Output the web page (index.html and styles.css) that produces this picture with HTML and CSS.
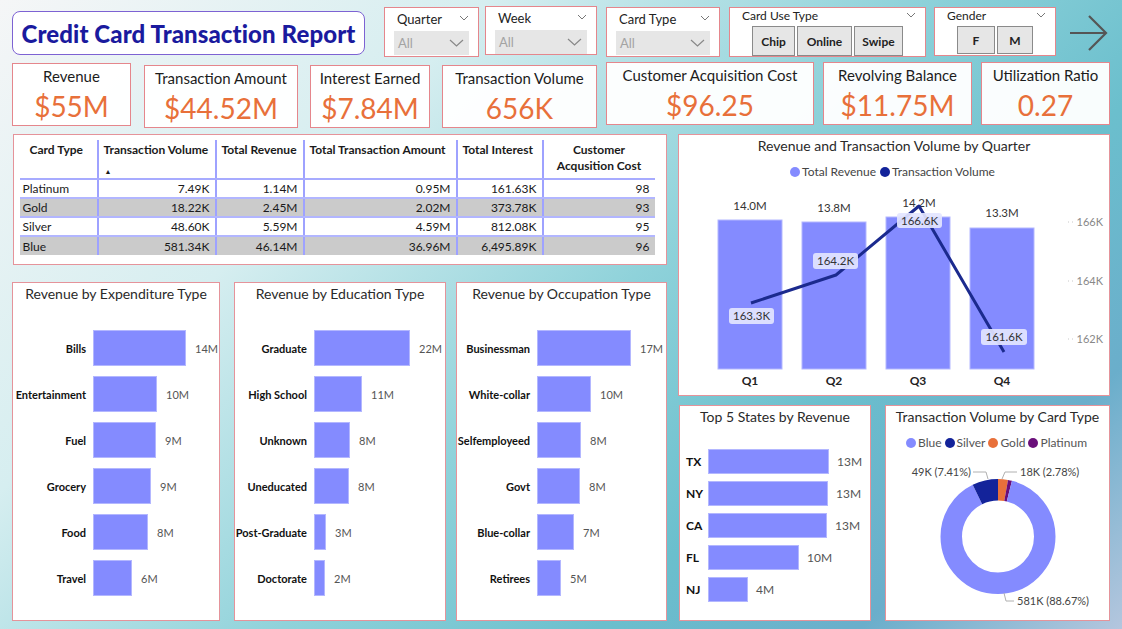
FILE: index.html
```html
<!DOCTYPE html>
<html lang="en">
<head>
<meta charset="utf-8">
<title>Credit Card Transaction Report</title>
<link rel="stylesheet" href="styles.css">
</head>
<body>
<div class="page">
  <header class="topbar">
    <div class="title-box"><h1>Credit Card Transaction Report</h1></div>

    <div class="slicer dd s-quarter">
      <div class="slicer-head"><span>Quarter</span><svg class="chev-s" width="10" height="6" viewBox="0 0 10 6"><polyline points="1,1 5,5 9,1"/></svg></div>
      <div class="dropdown"><span>All</span><svg class="chev-l" width="15" height="8" viewBox="0 0 15 8"><polyline points="1,1 7.5,7 14,1"/></svg></div>
    </div>
    <div class="slicer dd s-week">
      <div class="slicer-head"><span>Week</span><svg class="chev-s" width="10" height="6" viewBox="0 0 10 6"><polyline points="1,1 5,5 9,1"/></svg></div>
      <div class="dropdown"><span>All</span><svg class="chev-l" width="15" height="8" viewBox="0 0 15 8"><polyline points="1,1 7.5,7 14,1"/></svg></div>
    </div>
    <div class="slicer dd s-card">
      <div class="slicer-head"><span>Card Type</span><svg class="chev-s" width="10" height="6" viewBox="0 0 10 6"><polyline points="1,1 5,5 9,1"/></svg></div>
      <div class="dropdown"><span>All</span><svg class="chev-l" width="15" height="8" viewBox="0 0 15 8"><polyline points="1,1 7.5,7 14,1"/></svg></div>
    </div>
    <div class="slicer btns s-use">
      <div class="slicer-head small"><span>Card Use Type</span><svg class="chev-s" width="10" height="6" viewBox="0 0 10 6"><polyline points="1,1 5,5 9,1"/></svg></div>
      <div class="btn-row">
        <span class="tile w-chip">Chip</span>
        <span class="tile w-online">Online</span>
        <span class="tile w-swipe">Swipe</span>
      </div>
    </div>
    <div class="slicer btns s-gender">
      <div class="slicer-head small"><span>Gender</span><svg class="chev-s" width="10" height="6" viewBox="0 0 10 6"><polyline points="1,1 5,5 9,1"/></svg></div>
      <div class="btn-row">
        <span class="tile w-f">F</span>
        <span class="tile w-m">M</span>
      </div>
    </div>
    <svg class="nav-arrow" width="40" height="38" viewBox="0 0 40 38"><polyline points="1,19 37,19"/><polyline points="20,2 37,19 20,36"/></svg>
  </header>

  <section class="kpis">
    <div class="kpi k1"><div class="kpi-label">Revenue</div><div class="kpi-value">$55M</div></div>
    <div class="kpi k2"><div class="kpi-label">Transaction Amount</div><div class="kpi-value">$44.52M</div></div>
    <div class="kpi k3"><div class="kpi-label">Interest Earned</div><div class="kpi-value">$7.84M</div></div>
    <div class="kpi k4"><div class="kpi-label">Transaction Volume</div><div class="kpi-value">656K</div></div>
    <div class="kpi k5"><div class="kpi-label">Customer Acquisition Cost</div><div class="kpi-value">$96.25</div></div>
    <div class="kpi k6"><div class="kpi-label">Revolving Balance</div><div class="kpi-value">$11.75M</div></div>
    <div class="kpi k7"><div class="kpi-label">Utilization Ratio</div><div class="kpi-value">0.27</div></div>
  </section>

  <main class="main">
    <div class="col-left">
      <div class="panel table-panel">
        <table class="tbl">
          <thead>
            <tr>
              <th class="c-type">Card Type</th>
              <th class="c-vol"><div>Transaction Volume</div><div class="sort">&#9650;</div></th>
              <th class="c-rev">Total Revenue</th>
              <th class="c-amt">Total Transaction Amount</th>
              <th class="c-int">Total Interest</th>
              <th class="c-cac">Customer Acqusition Cost</th>
            </tr>
          </thead>
          <tbody>
            <tr><td>Platinum</td><td>7.49K</td><td>1.14M</td><td>0.95M</td><td>161.63K</td><td>98</td></tr>
            <tr class="alt"><td>Gold</td><td>18.22K</td><td>2.45M</td><td>2.02M</td><td>373.78K</td><td>93</td></tr>
            <tr><td>Silver</td><td>48.60K</td><td>5.59M</td><td>4.59M</td><td>812.08K</td><td>95</td></tr>
            <tr class="alt"><td>Blue</td><td>581.34K</td><td>46.14M</td><td>36.96M</td><td>6,495.89K</td><td>96</td></tr>
          </tbody>
        </table>
      </div>

      <div class="bar-panels">
        <div class="panel hbar p-exp">
          <div class="panel-title">Revenue by Expenditure Type</div>
          <div class="hbar-list">
            <div class="hrow"><span class="hlabel">Bills</span><span class="hbar-fill" style="width:93px"></span><span class="hval">14M</span></div>
            <div class="hrow"><span class="hlabel">Entertainment</span><span class="hbar-fill" style="width:64px"></span><span class="hval">10M</span></div>
            <div class="hrow"><span class="hlabel">Fuel</span><span class="hbar-fill" style="width:63px"></span><span class="hval">9M</span></div>
            <div class="hrow"><span class="hlabel">Grocery</span><span class="hbar-fill" style="width:58px"></span><span class="hval">9M</span></div>
            <div class="hrow"><span class="hlabel">Food</span><span class="hbar-fill" style="width:55px"></span><span class="hval">8M</span></div>
            <div class="hrow"><span class="hlabel">Travel</span><span class="hbar-fill" style="width:39px"></span><span class="hval">6M</span></div>
          </div>
        </div>
        <div class="panel hbar p-edu">
          <div class="panel-title">Revenue by Education Type</div>
          <div class="hbar-list">
            <div class="hrow"><span class="hlabel">Graduate</span><span class="hbar-fill" style="width:96px"></span><span class="hval">22M</span></div>
            <div class="hrow"><span class="hlabel">High School</span><span class="hbar-fill" style="width:48px"></span><span class="hval">11M</span></div>
            <div class="hrow"><span class="hlabel">Unknown</span><span class="hbar-fill" style="width:36px"></span><span class="hval">8M</span></div>
            <div class="hrow"><span class="hlabel">Uneducated</span><span class="hbar-fill" style="width:35px"></span><span class="hval">8M</span></div>
            <div class="hrow"><span class="hlabel">Post-Graduate</span><span class="hbar-fill" style="width:12px"></span><span class="hval">3M</span></div>
            <div class="hrow"><span class="hlabel">Doctorate</span><span class="hbar-fill" style="width:11px"></span><span class="hval">2M</span></div>
          </div>
        </div>
        <div class="panel hbar p-occ">
          <div class="panel-title">Revenue by Occupation Type</div>
          <div class="hbar-list">
            <div class="hrow"><span class="hlabel">Businessman</span><span class="hbar-fill" style="width:94px"></span><span class="hval">17M</span></div>
            <div class="hrow"><span class="hlabel">White-collar</span><span class="hbar-fill" style="width:54px"></span><span class="hval">10M</span></div>
            <div class="hrow"><span class="hlabel">Selfemployeed</span><span class="hbar-fill" style="width:44px"></span><span class="hval">8M</span></div>
            <div class="hrow"><span class="hlabel">Govt</span><span class="hbar-fill" style="width:43px"></span><span class="hval">8M</span></div>
            <div class="hrow"><span class="hlabel">Blue-collar</span><span class="hbar-fill" style="width:37px"></span><span class="hval">7M</span></div>
            <div class="hrow"><span class="hlabel">Retirees</span><span class="hbar-fill" style="width:24px"></span><span class="hval">5M</span></div>
          </div>
        </div>
      </div>
    </div>

    <div class="col-right">
      <div class="panel combo">
        <div class="panel-title">Revenue and Transaction Volume by Quarter</div>
        <div class="legend combo-legend">
          <span class="lg"><i class="dot d-blue"></i>Total Revenue</span>
          <span class="lg"><i class="dot d-navy"></i>Transaction Volume</span>
        </div>
        <svg class="combo-svg" width="429" height="206" viewBox="0 0 429 206">
          <g class="bars">
            <rect x="39" y="35" width="64" height="149"/>
            <rect x="123" y="37" width="64" height="147"/>
            <rect x="207" y="32" width="64" height="152"/>
            <rect x="291" y="43" width="64" height="141"/>
          </g>
          <g class="bar-vals">
            <text x="71" y="25">14.0M</text>
            <text x="155" y="27">13.8M</text>
            <text x="240" y="22">14.2M</text>
            <text x="323" y="32">13.3M</text>
          </g>
          <polyline class="vol-line" points="72,118 157,90 240,21 325,167"/>
          <g class="dl-box">
            <rect x="50" y="123" width="45" height="16" rx="3"/>
            <rect x="134" y="68" width="45" height="16" rx="3"/>
            <rect x="218" y="28" width="45" height="15" rx="3"/>
            <rect x="302" y="144" width="46" height="16" rx="3"/>
          </g>
          <g class="dl-text">
            <text x="72.5" y="135">163.3K</text>
            <text x="156.5" y="80">164.2K</text>
            <text x="240.5" y="39.5">166.6K</text>
            <text x="325" y="156">161.6K</text>
          </g>
          <g class="q-labels">
            <text x="71" y="200">Q1</text>
            <text x="155" y="200">Q2</text>
            <text x="239" y="200">Q3</text>
            <text x="323" y="200">Q4</text>
          </g>
          <g class="ticks">
            <line x1="389" y1="37" x2="396" y2="37"/>
            <line x1="389" y1="96" x2="396" y2="96"/>
            <line x1="389" y1="154" x2="396" y2="154"/>
          </g>
          <g class="axis">
            <text x="424" y="41">166K</text>
            <text x="424" y="100">164K</text>
            <text x="424" y="158">162K</text>
          </g>
        </svg>
      </div>

      <div class="right-bottom">
        <div class="panel states">
          <div class="panel-title">Top 5 States by Revenue</div>
          <div class="state-list">
            <div class="srow"><span class="slabel">TX</span><span class="hbar-fill" style="width:121px"></span><span class="sval">13M</span></div>
            <div class="srow"><span class="slabel">NY</span><span class="hbar-fill" style="width:120px"></span><span class="sval">13M</span></div>
            <div class="srow"><span class="slabel">CA</span><span class="hbar-fill" style="width:119px"></span><span class="sval">13M</span></div>
            <div class="srow"><span class="slabel">FL</span><span class="hbar-fill" style="width:91px"></span><span class="sval">10M</span></div>
            <div class="srow"><span class="slabel">NJ</span><span class="hbar-fill" style="width:40px"></span><span class="sval">4M</span></div>
          </div>
        </div>
        <div class="panel donut">
          <div class="panel-title">Transaction Volume by Card Type</div>
          <div class="legend donut-legend">
            <span class="lg"><i class="dot d-blue"></i>Blue</span>
            <span class="lg"><i class="dot d-navy"></i>Silver</span>
            <span class="lg"><i class="dot d-orange"></i>Gold</span>
            <span class="lg"><i class="dot d-purple"></i>Platinum</span>
          </div>
          <svg class="donut-svg" width="222" height="163" viewBox="0 0 222 163">
            <g transform="rotate(-90 112 83.5)" fill="none" stroke-width="21.5">
              <circle cx="112" cy="83.5" r="46.75" stroke="#e8703a" stroke-dasharray="8.17 293.74" stroke-dashoffset="0"/>
              <circle cx="112" cy="83.5" r="46.75" stroke="#6a0f7a" stroke-dasharray="3.35 293.74" stroke-dashoffset="-8.17"/>
              <circle cx="112" cy="83.5" r="46.75" stroke="#848bff" stroke-dasharray="260.46 293.74" stroke-dashoffset="-11.52"/>
              <circle cx="112" cy="83.5" r="46.75" stroke="#13239a" stroke-dasharray="21.77 293.74" stroke-dashoffset="-271.98"/>
            </g>
            <g class="leader">
              <polyline points="87,19 100,19 102,26"/>
              <polyline points="116,26 119,19 131,19"/>
              <polyline points="118,140 120,148 128,148"/>
            </g>
            <g class="dlabel">
              <text x="85" y="23" text-anchor="end">49K (7.41%)</text>
              <text x="134" y="23">18K (2.78%)</text>
              <text x="131" y="152">581K (88.67%)</text>
            </g>
          </svg>
        </div>
      </div>
    </div>
  </main>
</div>
</body>
</html>
```

FILE: styles.css
```css
* { box-sizing: border-box; margin: 0; padding: 0; }

html, body { width: 1122px; height: 629px; overflow: hidden; }

body {
  font-family: Lato, "Open Sans", sans-serif;
  color: #222;
  background: linear-gradient(135deg, #f5f6f7 0%, #d6eef0 28%, #8fd2da 52%, #6bbfcd 70%, #6aaecb 85%, #b4c6de 100%);
}

.page { width: 1122px; height: 629px; display: flex; flex-direction: column; }

/* ---------- top bar ---------- */
.topbar { display: flex; align-items: flex-start; height: 62px; padding-top: 7px; }

.title-box {
  margin-left: 12px; margin-top: 4px;
  width: 353px; height: 44px;
  background: #fff;
  border: 1.5px solid #7d62d3;
  border-radius: 8px;
  display: flex; align-items: center; justify-content: center;
}
.title-box h1 { font-size: 24px; font-weight: 900; color: #1a1a9e; letter-spacing: 0.1px; white-space: nowrap; }

.slicer {
  height: 50px; background: #fff;
  border: 1.5px solid #e5868c;
  display: flex; flex-direction: column;
}
.s-quarter { margin-left: 19px; width: 95px; }
.s-week { margin-left: 6px; width: 112px; margin-top: -1px; height: 49px; }
.s-card { margin-left: 9px; width: 114px; }
.s-use { margin-left: 9px; width: 197px; }
.s-gender { margin-left: 8px; width: 122px; height: 49px; }

.slicer-head {
  display: flex; justify-content: space-between; align-items: flex-start;
  padding: 3px 9px 0 12px; height: 23px;
  font-size: 13px; color: #222;
}
.slicer-head.small { font-size: 12px; padding-top: 0; height: 17px; }
.chev-s { margin-top: 4px; }
.chev-s polyline { fill: none; stroke: #777; stroke-width: 1; }

.dropdown {
  margin: 0 9px 0 9px; height: 24px;
  background: #e6e6e6;
  display: flex; align-items: center; justify-content: space-between;
  padding: 0 5px 0 4px;
  font-size: 13px; color: #a3a3a3;
}
.chev-l polyline { fill: none; stroke: #888; stroke-width: 1.2; }

.btn-row { display: flex; gap: 2px; justify-content: center; padding-top: 1px; }
.tile {
  height: 30px; background: #e6e6e6; border: 1px solid #8a8a8a;
  display: flex; align-items: center; justify-content: center;
  font-size: 12px; font-weight: 700; color: #222;
}
.s-gender .btn-row { padding-top: 1px; }
.s-gender .tile { height: 28px; }
.w-chip { width: 43px; }
.w-online { width: 55px; }
.w-swipe { width: 49px; }
.w-f { width: 38px; }
.w-m { width: 36px; }

.nav-arrow { margin-left: 13px; margin-top: 7px; }
.nav-arrow polyline { fill: none; stroke: #555; stroke-width: 2.2; }

/* ---------- KPI cards ---------- */
.kpis { display: flex; align-items: flex-start; height: 66px; }
.kpi {
  height: 63px; background: rgba(255,255,255,0.96);
  border: 1.5px solid #e5868c;
  display: flex; flex-direction: column; align-items: center;
  padding-top: 3px;
}
.kpi-label { font-size: 15px; line-height: 18px; color: #1c1c1c; white-space: nowrap; }
.kpi-value { font-size: 28px; line-height: 34px; margin-top: 4px; color: #e8703a; white-space: nowrap; }
.k1 { margin-left: 12px; width: 119px; margin-top: 1px; }
.k2 { margin-left: 13px; width: 154px; margin-top: 3px; }
.k3 { margin-left: 12px; width: 120px; margin-top: 3px; }
.k4 { margin-left: 12px; width: 155px; margin-top: 3px; }
.k5 { margin-left: 9px; width: 208px; }
.k6 { margin-left: 9px; width: 149px; }
.k7 { margin-left: 9px; width: 129px; }

/* ---------- main ---------- */
.main { display: flex; margin-top: 6px; }
.col-left { margin-left: 13px; width: 654px; display: flex; flex-direction: column; }
.col-right { margin-left: 11px; width: 432px; display: flex; flex-direction: column; }

.panel { background: #fff; border: 1.5px solid #e5939a; }
.panel-title {
  text-align: center; font-size: 14px; line-height: 22px; color: #2a2a2a;
  white-space: nowrap;
}

/* table */
.table-panel { height: 131px; padding: 5px 0 0 5.5px; }
.tbl { border-collapse: collapse; font-size: 12px; color: #1a1a1a; table-layout: fixed; }
.tbl th {
  font-weight: 700; text-align: left; vertical-align: top;
  height: 39px; padding: 2px 5px 0 5px; line-height: 16px;
  border-bottom: 2px solid #a7abff;
}
.tbl th + th, .tbl td + td { border-left: 2px solid #9ea2ff; }
.c-type { width: 78px; padding-left: 10px !important; }
.c-vol { width: 118px; }
.c-rev { width: 88px; }
.c-amt { width: 153px; }
.c-int { width: 86px; }
.c-cac { width: 112px; text-align: center !important; font-weight: 700; }
.sort { font-size: 7px; line-height: 8px; margin-top: 9px; margin-left: 1px; }
.tbl td {
  height: 19px; line-height: 17px; padding: 0 5px 0 5px; text-align: right;
  border-bottom: 2px solid #b2b6ff; white-space: nowrap;
}
.tbl td:first-child { text-align: left; padding-left: 3px; }
.tbl tr.alt td { background: #cbcbcb; }
.tbl tbody tr:last-child td { border-bottom: none; }

/* horizontal bar charts */
.bar-panels { display: flex; margin-top: 17px; height: 339px; }
.hbar { height: 339px; padding-top: 0; }
.p-exp { margin-left: -1px; width: 208px; }
.p-edu { margin-left: 14px; width: 212px; }
.p-occ { margin-left: 10px; width: 211px; }

.hbar-list { display: flex; flex-direction: column; gap: 10px; margin-top: 25px; }
.hrow { display: flex; align-items: center; height: 36px; }
.hlabel {
  display: flex; justify-content: flex-end; white-space: nowrap;
  font-size: 11px; font-weight: 700; color: #111;
  margin-right: 7px;
}
.p-exp .hlabel { width: 73px; }
.p-edu .hlabel { width: 72px; }
.p-occ .hlabel { width: 73px; }
.hbar-fill { display: block; height: 100%; background: #848bff; border: 1px solid #b3b7ff; flex: none; }
.hval { margin-left: 9px; font-size: 11px; color: #555; white-space: nowrap; }

/* combo chart */
.combo { height: 262px; padding-top: 0; display: flex; flex-direction: column; }
.legend { display: flex; justify-content: center; font-size: 12px; color: #444; line-height: 16px; }
.combo-legend { margin-top: 7px; gap: 4px; margin-left: -3px; }
.lg { display: flex; align-items: center; white-space: nowrap; }
.dot { display: inline-block; width: 10px; height: 10px; border-radius: 50%; margin-right: 2px; }
.d-blue { background: #848bff; }
.d-navy { background: #13239a; }
.d-orange { background: #e8703a; }
.d-purple { background: #6a0f7a; }
.combo-svg { display: block; margin-top: 5px; }
.bars rect { fill: #848bff; stroke: #b3b7ff; stroke-width: 1; }
.bar-vals text { font-family: Lato, sans-serif; font-size: 11.5px; fill: #333; text-anchor: middle; }
.vol-line { fill: none; stroke: #1b2a8e; stroke-width: 3; stroke-linejoin: round; }
.dl-box rect { fill: #e3e5ff; opacity: 0.92; }
.dl-text text { font-family: Lato, sans-serif; font-size: 11.5px; fill: #333; text-anchor: middle; }
.q-labels text { font-family: Lato, sans-serif; font-size: 12px; font-weight: 700; fill: #222; text-anchor: middle; }
.ticks line { stroke: #c8c8c8; stroke-width: 1; stroke-dasharray: 1 3; }
.axis text { font-family: Lato, sans-serif; font-size: 11px; fill: #888; text-anchor: end; }

/* bottom right */
.right-bottom { display: flex; margin-top: 9px; height: 216px; }
.states { margin-left: 1px; width: 192px; height: 216px; padding-top: 0; }
.state-list { display: flex; flex-direction: column; gap: 7px; margin-top: 21px; }
.srow { display: flex; align-items: center; height: 25px; }
.slabel { width: 28px; padding-left: 6px; font-size: 12px; font-weight: 700; color: #111; }
.sval { margin-left: 8px; font-size: 12px; color: #555; }

.donut { margin-left: 14px; width: 225px; height: 216px; padding-top: 0; }
.donut-legend { margin-top: 7px; gap: 3px; justify-content: flex-start; padding-left: 20px; color: #555; }
.donut-svg { display: block; margin-top: 2px; }
.leader polyline { fill: none; stroke: #b0b0b0; stroke-width: 1; }
.dlabel text { font-family: Lato, sans-serif; font-size: 11px; fill: #444; }
```
